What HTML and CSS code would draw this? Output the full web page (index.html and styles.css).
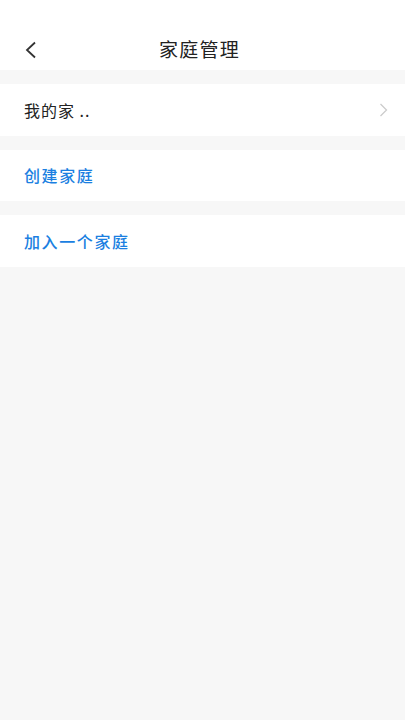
FILE: index.html
```html
<!DOCTYPE html>
<html lang="zh-CN">
<head>
  <meta charset="UTF-8">
  <meta name="viewport" content="width=device-width, initial-scale=1.0">
  <title>家庭管理</title>
  <link rel="stylesheet" href="styles.css">
</head>
<body>
  <div class="header">
    <span class="back">
      <svg width="14" height="18" viewBox="0 0 14 18"><path d="M11 1.5 L3 9 L11 16.5" fill="none" stroke="#333" stroke-width="1.8"/></svg>
    </span>
    <h1>家庭管理</h1>
  </div>
  <div class="list">
    <div class="row">
      <span>我的家 ..</span>
      <svg class="arrow" width="9" height="14" viewBox="0 0 9 14"><path d="M1.5 1 L7.5 7 L1.5 13" fill="none" stroke="#ccc" stroke-width="1.3"/></svg>
    </div>
    <div class="row link">创建家庭</div>
    <div class="row link">加入一个家庭</div>
  </div>
</body>
</html>
```
FILE: styles.css
```css
body {
  margin: 0;
  background: #f7f7f7;
  font-family: "Noto Sans CJK SC", "Noto Sans", sans-serif;
  color: #222;
  min-height: 720px;
}
.header {
  height: 70px;
  background: #fff;
  display: flex;
  align-items: center;
  justify-content: center;
  position: relative;
}
.header h1 {
  margin: 0 6px 0 0;
  font-size: 19px;
  font-weight: 400;
  letter-spacing: 1.2px;
  padding-top: 27px;
}
.back {
  position: absolute;
  left: 24px;
  top: 41px;
  display: flex;
}
.list {
  padding-top: 14px;
  display: flex;
  flex-direction: column;
  gap: 14px;
}
.row {
  height: 51.5px;
  background: #fff;
  display: flex;
  align-items: center;
  justify-content: space-between;
  padding: 0 17px 0 24px;
  font-size: 16px;
  letter-spacing: 1px;
}
.row.link {
  color: #1b7fe1;
  font-weight: 500;
  letter-spacing: 1.6px;
}
```
